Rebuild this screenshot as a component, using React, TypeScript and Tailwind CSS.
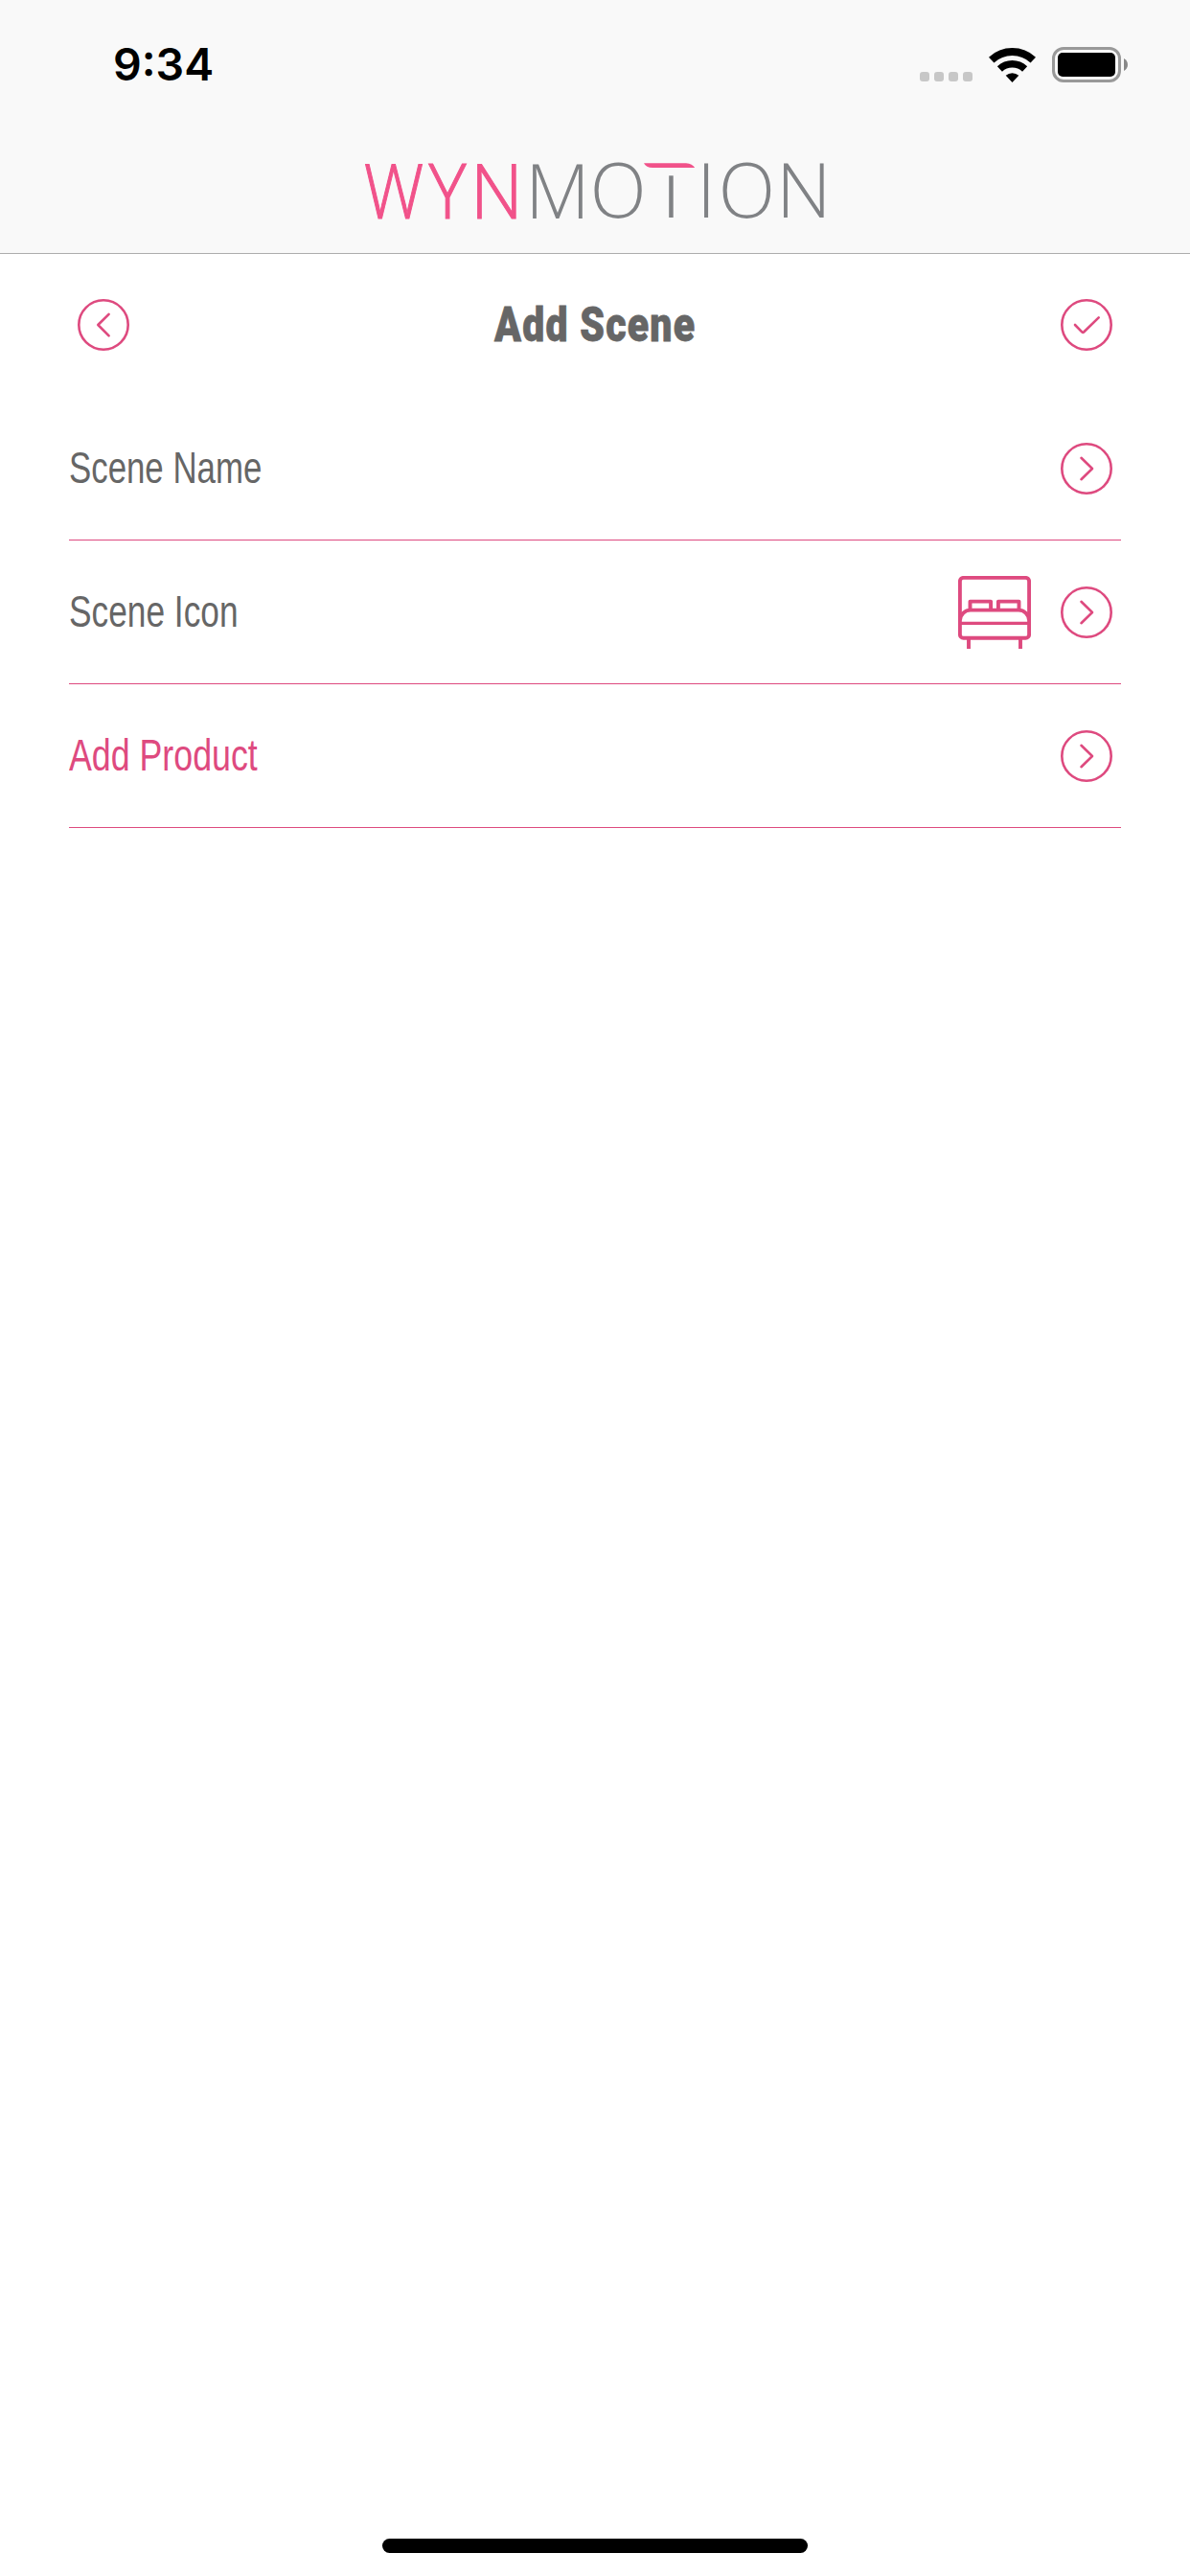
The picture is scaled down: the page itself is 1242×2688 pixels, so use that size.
import React from 'react';

type GlyphName = 'left' | 'right' | 'check';

const glyphs: Record<GlyphName, string> = {
  left: 'M35.6 18.8 24.3 30 35.6 41.3',
  right: 'M24.5 18.8 36 30 24.5 41.2',
  check: 'M18 30 25.2 37.3Q26.3 38.3 27.4 37.3L42.7 22.4',
};

function CircleButton({ glyph, label }: { glyph: GlyphName; label: string }) {
  return (
    <button aria-label={label} className="block size-[60px] shrink-0 text-[#de4a7f]">
      <svg viewBox="0 0 60 60" className="size-full" fill="none" stroke="currentColor" strokeWidth="2.6" strokeLinecap="round" strokeLinejoin="round">
        <circle cx="30" cy="30" r="25.7" />
        <path d={glyphs[glyph]} />
      </svg>
    </button>
  );
}

function BedIcon() {
  return (
    <svg viewBox="0 0 76 76" className="mr-7 size-[76px] text-[#de4a7f]" fill="none" stroke="currentColor" strokeWidth="3.9">
      <rect x="1.9" y="1.9" width="72.2" height="62.9" rx="3.6" />
      <path d="M2 46C2.5 40 7 35.6 13 35.6H63C69 35.6 73.5 40 74 46" />
      <path d="M2 49.4H74" strokeWidth="3.3" />
      <path d="M12.5 36V26.6H34.1V36M41.9 36V26.6H63.5V36" strokeLinejoin="round" />
      <path d="M11 65V76M65 65V76" />
    </svg>
  );
}

function Logo() {
  return (
    <svg viewBox="370 130 500 134" className="h-[134px] w-[500px] overflow-visible" role="img" aria-label="WYNMOTION">
      <g fontFamily="'Open Sans', sans-serif" fontWeight="300" fontSize="80">
        <g fill="#f1528a" stroke="#f1528a" strokeWidth="1.1">
          <text transform="translate(379.8 228) scale(.875 1)">W</text>
          <text transform="translate(447.5 228) scale(.925 1)">Y</text>
          <text transform="translate(491 228) scale(.95 1)">N</text>
        </g>
        <g fill="#808285">
          <text transform="translate(548.2 228) scale(.977 1)">M</text>
          <text transform="translate(615.7 227) scale(.962 1)">O</text>
          <text transform="translate(727 227)">I</text>
          <text transform="translate(749.8 227) scale(.97 1)">O</text>
          <text transform="translate(810 227)">N</text>
        </g>
      </g>
      <path d="M698.2 183.3h4.5V227h-4.5z" fill="#808285" />
      <path d="M672 170.2H716C720.5 170.2 723.5 172.5 725.2 175H681C676.5 175 673.5 173 672 170.2Z" fill="#f1528a" />
    </svg>
  );
}

function StatusBar() {
  return (
    <div className="flex h-[130px] items-center pt-[5px] pr-[65px] pl-[118px]">
      <span className="font-[Inter] text-[46.5px] leading-none font-semibold text-black">9:34</span>
      <div className="ml-auto flex items-center">
        <div className="mt-[25px] mr-[17px] flex gap-[5px]">
          {[0, 1, 2, 3].map((i) => (
            <span key={i} className="size-[10px] rounded-[3px] bg-[#c7c7c7]" />
          ))}
        </div>
        <svg viewBox="0 0 49 36" className="mr-[17px] h-9 w-[49px]" fill="none" stroke="#000">
          <path d="M2.7 12.6A32 32 0 0 1 46.3 12.6" strokeWidth="8" />
          <path d="M11.4 22A19.2 19.2 0 0 1 37.6 22" strokeWidth="7.5" />
          <path d="M24.5 36 17.7 28.8A10.5 10.5 0 0 1 31.3 28.8Z" fill="#000" stroke="none" />
        </svg>
        <div className="h-[37px] w-[72px] rounded-[12px] border-3 border-[#999] p-[3px]">
          <div className="h-[25px] w-[60px] rounded-[5px] bg-black" />
        </div>
        <svg viewBox="0 0 4 13" className="ml-[3px] h-[13px] w-1" fill="#888">
          <path d="M0 0C5.300 2.500 5.300 10.500 0 13Z" />
        </svg>
      </div>
    </div>
  );
}

function Row({ label, labelClass, icon }: { label: string; labelClass: string; icon?: React.ReactNode }) {
  return (
    <li className="flex h-[150px] items-center border-b border-[#de4a7f] pt-px pr-[6px]">
      <span className={`relative -top-px mr-auto origin-left text-[46px] leading-none whitespace-nowrap ${labelClass}`}>{label}</span>
      {icon}
      <CircleButton glyph="right" label={label} />
    </li>
  );
}

export default function App() {
  return (
    <div className="flex h-[2688px] w-[1242px] flex-col bg-white font-['Liberation_Sans',sans-serif]">
      <header className="h-[265px] border-b border-[#adadad] bg-[#f9f9f9]">
        <StatusBar />
        <div className="flex justify-center pr-[2px]">
          <Logo />
        </div>
      </header>
      <main className="flex-1 px-[72px]">
        <div className="mb-px grid h-[148px] grid-cols-[1fr_auto_1fr] items-center px-[6px]">
          <CircleButton glyph="left" label="Back" />
          <h1 className="scale-x-[.82] font-[Roboto] text-[50px] leading-none font-black tracking-[1.5px] whitespace-nowrap text-[#666] [-webkit-text-stroke:0.8px_#666]">Add Scene</h1>
          <div className="flex justify-end">
            <CircleButton glyph="check" label="Save" />
          </div>
        </div>
        <ul>
          <Row label="Scene Name" labelClass="scale-x-[.757] text-[#666]" />
          <Row label="Scene Icon" labelClass="scale-x-[.767] text-[#666]" icon={<BedIcon />} />
          <Row label="Add Product" labelClass="scale-x-[.777] text-[#de4a7f]" />
        </ul>
      </main>
      <div className="mx-auto mb-6 h-[15px] w-[444px] rounded-full bg-black" />
    </div>
  );
}
